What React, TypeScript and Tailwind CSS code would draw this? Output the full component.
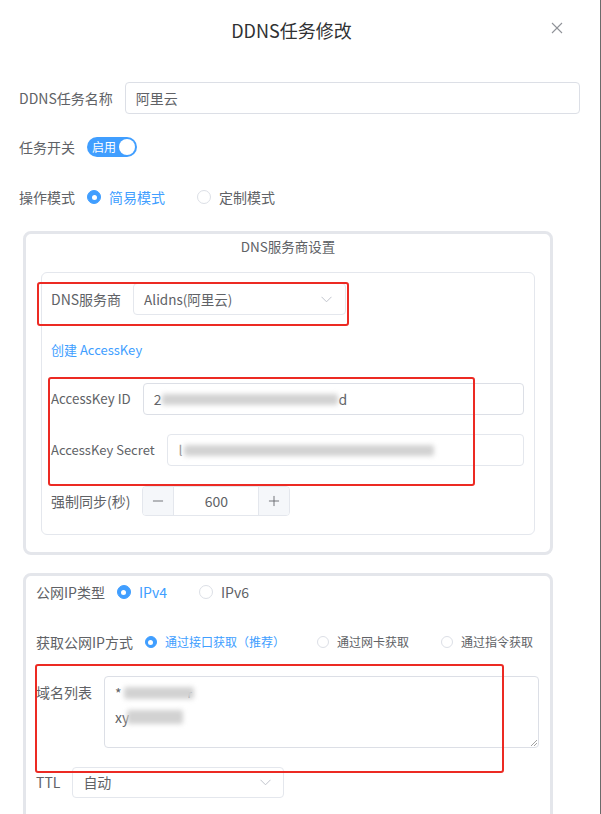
import React from "react";
import { Minus, Plus } from "lucide-react";

const Radio = ({ checked, label, size = 14, text = "text-[14px]" }: { checked?: boolean; label: string; size?: number; text?: string }) => (
  <div className="flex items-center gap-[8px] mr-[32px] shrink-0 whitespace-nowrap">
    <span
      className={
        checked
          ? "flex shrink-0 items-center justify-center rounded-full bg-[#409eff] border border-[#409eff]"
          : "flex shrink-0 items-center justify-center rounded-full bg-white border border-[#dcdfe6]"
      }
      style={{ width: size, height: size }}
    >
      {checked && <span className="block w-[5px] h-[5px] rounded-full bg-white" />}
    </span>
    <span className={`${text} ${checked ? "text-[#409eff]" : "text-[#606266]"} leading-none whitespace-nowrap`}>{label}</span>
  </div>
);

const Chevron = () => (
  <svg width="11" height="7" viewBox="0 0 11 7" fill="none">
    <polyline points="0.5,0.8 5.5,5.8 10.5,0.8" stroke="#c0c4cc" strokeWidth="1" />
  </svg>
);

const Blur = ({ w, h = 11, className = "" }: { w: number; h?: number; className?: string }) => (
  <span
    className={`inline-block bg-[#d2d2d2] blur-[2.5px] rounded-[2px] align-middle ${className}`}
    style={{ width: w, height: h }}
  />
);

export default function App() {
  return (
    <div className="relative w-[601px] h-[814px] overflow-hidden bg-white border-r border-[#6b6b6b] text-[#606266] font-['Noto_Sans_CJK_SC','Noto_Sans',sans-serif]">
      {/* header */}
      <div className="relative h-[60px] flex items-center justify-center pr-[17px]">
        <span className="text-[18px] text-[#303133] leading-none">DDNS任务修改</span>
        <svg className="absolute left-[551px] top-[22px]" width="12" height="12" viewBox="0 0 12 12" fill="none">
          <line x1="1" y1="1" x2="11" y2="11" stroke="#909399" strokeWidth="1.1" />
          <line x1="11" y1="1" x2="1" y2="11" stroke="#909399" strokeWidth="1.1" />
        </svg>
      </div>

      <div className="pl-[19px] pr-[20px] text-[14px]">
        {/* name */}
        <div className="mt-[22px] flex items-center h-[32px]">
          <span className="pr-[12px] whitespace-nowrap">DDNS任务名称</span>
          <div className="flex-1 h-[32px] border border-[#dcdfe6] rounded-[4px] flex items-center px-[10px] text-[#606266]">阿里云</div>
        </div>

        {/* switch */}
        <div className="mt-[18px] flex items-center h-[30px]">
          <span className="pr-[12px]">任务开关</span>
          <div className="w-[50px] h-[20px] rounded-full bg-[#409eff] flex items-center justify-between pl-[5px] pr-[2px]">
            <span className="text-[12px] text-white leading-none">启用</span>
            <span className="w-[16px] h-[16px] rounded-full bg-white" />
          </div>
        </div>

        {/* mode */}
        <div className="mt-[20px] flex items-center h-[30px]">
          <span className="pr-[12px]">操作模式</span>
          <Radio checked label="简易模式" />
          <Radio label="定制模式" />
        </div>

        {/* DNS provider box */}
        <div className="mt-[19px] ml-[4px] mr-[27px] border-[3px] border-[#e4e6eb] rounded-[8px] px-[15px] pb-[17px]">
          <div className="h-[24px] leading-[24px] text-center text-[13.5px]">DNS服务商设置</div>
          <div className="mt-[14px] border border-[#e4e7ed] rounded-[6px] pl-[9px] pr-[10px] pt-[10px] pb-[18px]">
            <div className="flex items-center h-[32px]">
              <span className="pr-[12px] whitespace-nowrap">DNS服务商</span>
              <div className="w-[213px] h-[32px] border border-[#e4e7ed] rounded-[4px] flex items-center justify-between pl-[10px] pr-[13px]">
                <span className="text-[13.5px]">Alidns(阿里云)</span>
                <Chevron />
              </div>
            </div>
            <div className="mt-[25px] h-[20px] flex items-center text-[#409eff] text-[13px]">创建 AccessKey</div>
            <div className="mt-[23px] flex items-center h-[32px]">
              <span className="pr-[12px] whitespace-nowrap text-[13.3px]">AccessKey ID</span>
              <div className="flex-1 h-[32px] border border-[#dcdfe6] rounded-[4px] flex items-center pl-[10px]">
                <span className="text-[#606266]">2</span>
                <Blur w={176} className="ml-[1px]" />
                <span>d</span>
              </div>
            </div>
            <div className="mt-[19px] flex items-center h-[32px]">
              <span className="pr-[12px] whitespace-nowrap text-[13px]">AccessKey Secret</span>
              <div className="flex-1 h-[32px] border border-[#e4e7ed] rounded-[4px] flex items-center pl-[11px]">
                <span className="text-[#999]">l</span>
                <Blur w={250} className="ml-[1px]" />
              </div>
            </div>
            <div className="mt-[20px] flex items-center h-[30px]">
              <span className="pr-[12px] whitespace-nowrap">强制同步(秒)</span>
              <div className="w-[148px] h-[30px] border border-[#e4e7ed] rounded-[4px] flex overflow-hidden">
                <div className="w-[31px] h-full bg-[#f5f7fa] border-r border-[#e4e7ed] flex items-center justify-center">
                  <Minus size={16} strokeWidth={1.3} color="#606266" />
                </div>
                <div className="flex-1 flex items-center justify-center">600</div>
                <div className="w-[31px] h-full bg-[#f5f7fa] border-l border-[#e4e7ed] flex items-center justify-center">
                  <Plus size={16} strokeWidth={1.3} color="#606266" />
                </div>
              </div>
            </div>
          </div>
        </div>

        {/* IP box */}
        <div className="mt-[18px] ml-[4px] mr-[27px] h-[300px] border-[3px] border-[#e4e6eb] rounded-[8px] pl-[10px] pr-[11px]">
          <div className="flex items-center h-[32px]">
            <span className="pr-[12px] whitespace-nowrap">公网IP类型</span>
            <Radio checked label="IPv4" />
            <Radio label="IPv6" />
          </div>
          <div className="mt-[18px] flex items-center h-[32px]">
            <span className="pr-[12px] whitespace-nowrap shrink-0">获取公网IP方式</span>
            <Radio checked size={12} text="text-[12px]" label="通过接口获取（推荐）" />
            <Radio size={12} text="text-[12px]" label="通过网卡获取" />
            <Radio size={12} text="text-[12px]" label="通过指令获取" />
          </div>
          <div className="mt-[18px] flex items-start">
            <span className="pr-[12px] h-[32px] leading-[32px] whitespace-nowrap">域名列表</span>
            <div className="relative flex-1 h-[72px] border border-[#dcdfe6] rounded-[4px] pl-[10px] pt-[4px] leading-[24px]">
              <div className="flex items-center h-[24px]">
                <span>*</span>
                <Blur w={70} h={12} className="ml-[2px]" />
                <span className="text-[11px] -ml-[6px]">r</span>
              </div>
              <div className="flex items-center h-[24px]">
                <span>xy</span>
                <Blur w={56} h={14} className="-ml-[2px]" />
              </div>
              <svg className="absolute right-[1px] bottom-[1px]" width="7" height="7" viewBox="0 0 7 7">
                <line x1="1" y1="7" x2="7" y2="1" stroke="#8a8a8a" strokeWidth="0.8" />
                <line x1="4" y1="7" x2="7" y2="4" stroke="#8a8a8a" strokeWidth="0.8" />
              </svg>
            </div>
          </div>
          <div className="mt-[19px] flex items-center h-[31px]">
            <span className="pr-[12px]">TTL</span>
            <div className="w-[212px] h-[31px] border border-[#e4e7ed] rounded-[4px] flex items-center justify-between pl-[10px] pr-[12px]">
              <span>自动</span>
              <Chevron />
            </div>
          </div>
        </div>
      </div>

      {/* red annotation boxes */}
      <div className="absolute left-[37px] top-[282px] w-[312px] h-[44px] border-2 border-[#ec2a23] rounded-[3px] pointer-events-none" />
      <div className="absolute left-[48px] top-[377px] w-[427px] h-[109px] border-2 border-[#ec2a23] rounded-[3px] pointer-events-none" />
      <div className="absolute left-[35px] top-[664px] w-[469px] h-[109px] border-2 border-[#ec2a23] rounded-[3px] pointer-events-none" />
    </div>
  );
}
